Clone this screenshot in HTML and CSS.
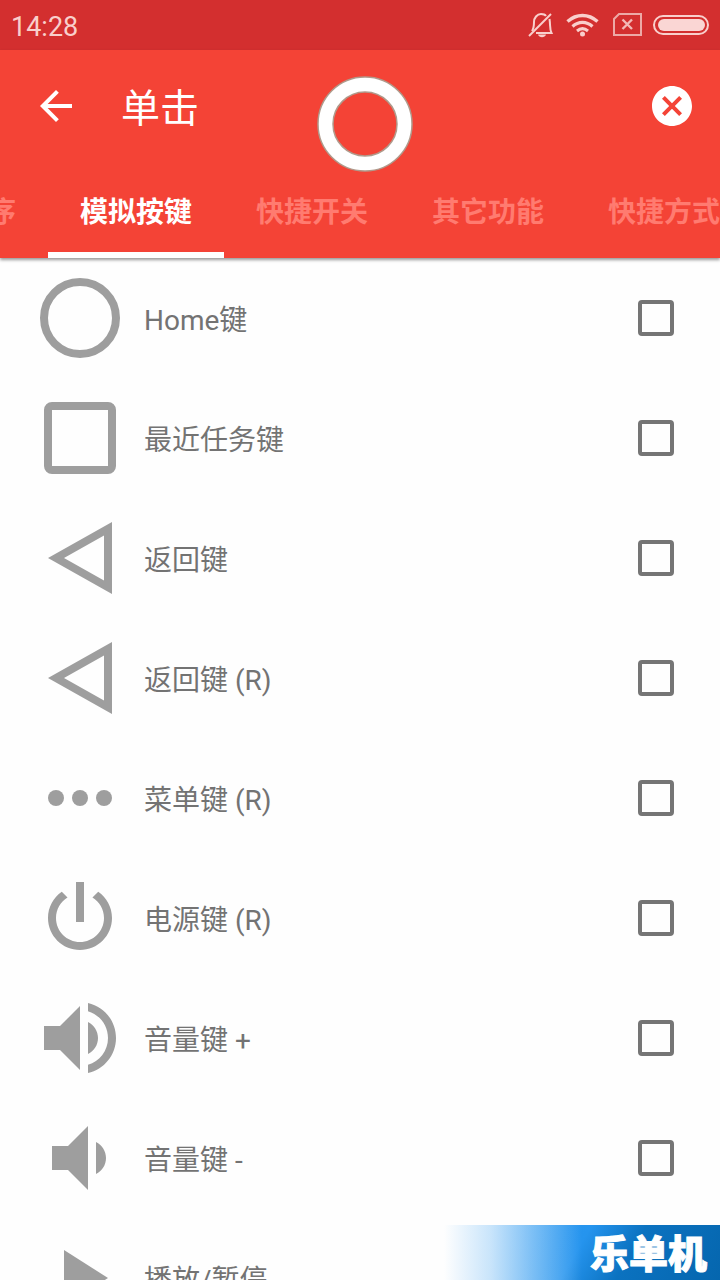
FILE: index.html
```
<!DOCTYPE html>
<html lang="zh-CN">
<head>
    <meta charset="UTF-8">
    <meta name="viewport" content="width=device-width, initial-scale=1.0">
    <title>单击</title>
    <link rel="stylesheet" href="styles.css">
</head>
<body>
    <div class="screen">
        <div class="status-bar">
            <span class="clock">14:28</span>
            <svg class="status-icons" width="184" height="30" viewBox="0 0 184 30" fill="none" stroke="#f9cfcc" stroke-width="2">
                <!-- muted bell -->
                <path d="M5 21c2-3 2-5 2-9 0-4 3-8 7-8 2 0 4 .5 5 2M22.500 9c1 6 0 10 2 14H9"/>
                <path d="M2 26L24 4"/>
                <path d="M11 24.500h8c-1 3.500-7 3.500-8 0z" fill="#f9cfcc" stroke="none"/>
                <!-- wifi -->
                <path d="M40.500 11.500c9-8 21-8 30 0" stroke-width="3.400"/>
                <path d="M45.500 16.500c6-5.500 14-5.500 20 0" stroke-width="3.200"/>
                <path d="M50 21c3.500-3 7.500-3 11 0" stroke-width="3"/>
                <circle cx="55.500" cy="24" r="2.500" fill="#f9cfcc" stroke="none"/>
                <!-- no sim -->
                <path d="M92 4h22v21H87V9z" stroke="#eda9a6"/>
                <path d="M95.500 9.500l9.500 9.500M105 9.500l-9.500 9.500" stroke="#f3b9b6" stroke-width="2.400"/>
                <!-- battery -->
                <rect x="127" y="6" width="54" height="18" rx="9"/>
                <rect x="131" y="9" width="47" height="12" rx="6" fill="#fad6d4" stroke="none"/>
            </svg>
        </div>

        <header class="header">
            <div class="toolbar">
                <svg class="back" width="48" height="48" viewBox="0 0 24 24"><path fill="#fff" d="M20 11H7.830l5.590-5.590L12 4l-8 8 8 8 1.410-1.410L7.830 13H20v-2z"/></svg>
                <h1>单击</h1>
                <svg class="close" width="48" height="48" viewBox="0 0 24 24"><path fill="#fff" d="M12 2C6.470 2 2 6.470 2 12s4.470 10 10 10 10-4.470 10-10S17.530 2 12 2zm5 13.590L15.590 17 12 13.410 8.410 17 7 15.590 10.590 12 7 8.410 8.410 7 12 10.590 15.590 7 17 8.410 13.410 12 17 15.590z"/></svg>
            </div>
            <nav class="tabs">
                <div class="tab">应用程序</div>
                <div class="tab active">模拟按键</div>
                <div class="tab">快捷开关</div>
                <div class="tab">其它功能</div>
                <div class="tab">快捷方式</div>
            </nav>
        </header>

        <div class="list">
            <div class="row">
                <svg class="icon" viewBox="0 0 24 24"><circle class="line" cx="12" cy="12" r="9"/></svg>
                <span class="label">Home键</span>
                <span class="checkbox"></span>
            </div>
            <div class="row">
                <svg class="icon" viewBox="0 0 24 24"><path fill-rule="evenodd" d="M5 3h14a2 2 0 0 1 2 2v14a2 2 0 0 1-2 2H5a2 2 0 0 1-2-2V5a2 2 0 0 1 2-2zm0 2v14h14V5z"/></svg>
                <span class="label">最近任务键</span>
                <span class="checkbox"></span>
            </div>
            <div class="row">
                <svg class="icon" viewBox="0 0 24 24"><path fill-rule="evenodd" d="M20 3v18L4 12zM18 6.400L8 12l10 5.600z"/></svg>
                <span class="label">返回键</span>
                <span class="checkbox"></span>
            </div>
            <div class="row">
                <svg class="icon" viewBox="0 0 24 24"><path fill-rule="evenodd" d="M20 3v18L4 12zM18 6.400L8 12l10 5.600z"/></svg>
                <span class="label">返回键 (R)</span>
                <span class="checkbox"></span>
            </div>
            <div class="row">
                <svg class="icon" viewBox="0 0 24 24"><circle cx="6" cy="12" r="2"/><circle cx="12" cy="12" r="2"/><circle cx="18" cy="12" r="2"/></svg>
                <span class="label">菜单键 (R)</span>
                <span class="checkbox"></span>
            </div>
            <div class="row">
                <svg class="icon" viewBox="0 0 24 24"><path d="M13 3h-2v10h2V3zm3.560 2.440l-1.450 1.450C16.840 7.940 18 9.830 18 12c0 3.310-2.690 6-6 6s-6-2.690-6-6c0-2.170 1.160-4.060 2.880-5.120L7.440 5.440C5.360 6.880 4 9.280 4 12c0 4.420 3.580 8 8 8s8-3.580 8-8c0-2.720-1.360-5.120-3.440-6.560z"/></svg>
                <span class="label">电源键 (R)</span>
                <span class="checkbox"></span>
            </div>
            <div class="row">
                <svg class="icon" viewBox="0 0 24 24"><path d="M3 9v6h4l5 5V4L7 9H3zm13.500 3c0-1.770-1.020-3.290-2.500-4.030v8.050c1.480-.730 2.500-2.250 2.500-4.020zM14 3.230v2.060c2.890.860 5 3.540 5 6.710s-2.110 5.850-5 6.710v2.060c4.010-.910 7-4.490 7-8.770s-2.990-7.860-7-8.770z"/></svg>
                <span class="label">音量键 +</span>
                <span class="checkbox"></span>
            </div>
            <div class="row">
                <svg class="icon" viewBox="0 0 24 24"><path d="M18.500 12c0-1.770-1.020-3.290-2.500-4.030v8.050c1.480-.730 2.500-2.250 2.500-4.020zM5 9v6h4l5 5V4L9 9H5z"/></svg>
                <span class="label">音量键 -</span>
                <span class="checkbox"></span>
            </div>
            <div class="row">
                <svg class="icon" viewBox="0 0 24 24"><path d="M8 5v14l11-7z"/></svg>
                <span class="label">播放/暂停</span>
                <span class="checkbox"></span>
            </div>
        </div>

        <!-- floating button over the app -->
        <svg class="float-ring" width="100" height="100" viewBox="0 0 100 100" fill="none">
            <circle cx="50" cy="50" r="39.500" stroke="#b09a8c" stroke-width="16.500"/>
            <circle cx="50" cy="50" r="39.500" stroke="#fff" stroke-width="13.500"/>
        </svg>

        <div class="brand">乐单机</div>
    </div>
</body>
</html>
```
FILE: styles.css
```
body {
    margin: 0;
    font-family: Roboto, "Noto Sans CJK SC", sans-serif;
    background: #fefefe;
}
.screen {
    position: relative;
    width: 720px;
    height: 1280px;
    overflow: hidden;
}
.status-bar {
    display: flex;
    align-items: center;
    justify-content: space-between;
    box-sizing: border-box;
    height: 50px;
    padding: 0 9px 0 11px;
    background: #d32f2f;
}
.clock {
    color: #f9cfcc;
    font-size: 27px;
    line-height: 32px;
    padding-top: 3px;
}
.header {
    position: relative;
    height: 208px;
    background: #f44336;
    box-shadow: 0 2px 3px rgba(0,0,0,0.4);
}
.toolbar {
    display: flex;
    align-items: center;
    height: 112px;
    padding: 0 24px 0 32px;
}
h1 {
    flex: 1;
    margin: 0 0 0 41px;
    padding-top: 5px;
    color: white;
    font-size: 39px;
    font-weight: 400;
    line-height: 48px;
}
.tabs {
    display: flex;
    height: 96px;
    margin-left: -128px;
}
.tab {
    flex: 0 0 176px;
    box-sizing: border-box;
    height: 96px;
    border-bottom: 6px solid transparent;
    color: #ff7b70;
    font-size: 28px;
    font-weight: 700;
    line-height: 101px;
    text-align: center;
}
.tab.active {
    color: white;
    border-bottom-color: white;
}
.row {
    display: flex;
    align-items: center;
    box-sizing: border-box;
    height: 120px;
    padding: 0 46px 0 32px;
}
.icon {
    width: 96px;
    height: 96px;
    fill: #9e9e9e;
}
.icon .line {
    fill: none;
    stroke: #9e9e9e;
    stroke-width: 2;
}
.label {
    flex: 1;
    margin-left: 16px;
    padding-top: 5px;
    color: #737373;
    font-size: 28px;
    line-height: 40px;
}
.checkbox {
    box-sizing: border-box;
    width: 36px;
    height: 36px;
    border: 4px solid #757575;
    border-radius: 4px;
}
.float-ring {
    position: absolute;
    left: 315px;
    top: 74px;
}
.brand {
    position: absolute;
    right: 0;
    bottom: 0;
    box-sizing: border-box;
    width: 276px;
    height: 55px;
    padding-right: 13px;
    background:
        linear-gradient(90deg, #fefefe 0%, rgba(254,254,254,0.75) 17%, rgba(254,254,254,0.4) 32%, rgba(254,254,254,0) 50%),
        linear-gradient(120deg, #2b9af3 0%, #2594ee 48%, #0b72c0 66%, #0566ae 100%);
    color: white;
    font-family: "Noto Sans CJK SC", sans-serif;
    font-size: 39px;
    font-weight: 900;
    line-height: 52px;
    text-align: right;
    -webkit-text-stroke: 1px white;
}
```
